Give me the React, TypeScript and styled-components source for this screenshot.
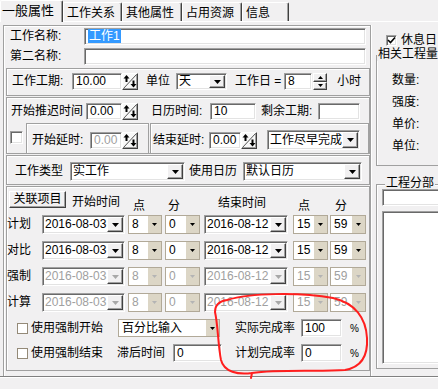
import styled, { createGlobalStyle, css } from "styled-components";

const FACE = "#f1f0f1";

const GlobalStyle = createGlobalStyle`
  html, body { margin: 0; padding: 0; background: ${FACE}; }
  body {
    font-family: "Liberation Sans", "Noto Sans CJK SC", sans-serif;
    font-size: 12px;
    color: #000;
  }
  * { box-sizing: border-box; }
`;

const sunken = css`
  background: #fff;
  border: 1px solid;
  border-color: #a0a0a0 #fff #fff #a0a0a0;
  box-shadow: inset 1px 1px 0 #696969, inset -1px -1px 0 #e3e3e3;
`;

const raised = css`
  background: ${FACE};
  border: 1px solid;
  border-color: #fff #404040 #404040 #fff;
  box-shadow: inset -1px -1px 0 #a0a0a0;
`;

const Window = styled.div`
  position: relative;
  width: 438px;
  height: 389px;
  overflow: hidden;
  background: ${FACE};
`;

const TabStrip = styled.div`
  position: relative;
  z-index: 1;
  display: flex;
  align-items: flex-end;
  height: 21px;
`;

const Tab = styled.div<{ $active?: boolean; $w: number }>`
  flex-shrink: 0;
  width: ${p => p.$w}px;
  height: ${p => (p.$active ? 22 : 19)}px;
  margin-bottom: ${p => (p.$active ? -1 : 0)}px;
  padding: ${p => (p.$active ? "2px 0 0 1px" : "3px 0 0 3px")};
  background: ${FACE};
  border-top: 1px solid #fff;
  border-left: 1px solid #fff;
  border-right: 1px solid #404040;
  border-radius: 2px 2px 0 0;
  box-shadow: inset -1px 0 0 #a0a0a0;
  font-size: ${p => (p.$active ? 13 : 12)}px;
  line-height: 15px;
  white-space: nowrap;
`;

const Page = styled.div`
  display: flex;
  height: 356px;
  border-top: 1px solid #fff;
  border-bottom: 1px solid #808080;
  box-shadow: 0 1px 0 #fff;
`;

const LeftPanel = styled.div`
  display: flex;
  flex-direction: column;
  flex-shrink: 0;
  width: 368px;
  height: 351px;
  margin: 3px 0 0 3px;
  border: 1px solid #a0a0a0;
  border-bottom: none;
  box-shadow: inset 1px 1px 0 #fff, 1px 0 0 #fff;
`;

const Row = styled.div<{ $h?: number; $mt?: number; $pl?: number }>`
  display: flex;
  align-items: center;
  flex-shrink: 0;
  height: ${p => p.$h ?? 17}px;
  margin-top: ${p => p.$mt ?? 0}px;
  padding-left: ${p => p.$pl ?? 0}px;
`;

const HeadRow = styled.div`
  display: flex;
  align-items: flex-start;
  flex-shrink: 0;
  height: 24px;
  margin-top: 4px;
`;

const SplitRow = styled.div`
  display: flex;
  align-items: stretch;
  flex-shrink: 0;
  height: 30px;
  margin-top: 3px;
`;

const Label = styled.span<{ $w?: number; $ml?: number; $mt?: number; $small?: boolean }>`
  display: block;
  flex-shrink: 0;
  width: ${p => (p.$w ? `${p.$w}px` : "auto")};
  margin-left: ${p => p.$ml ?? 0}px;
  margin-top: ${p => p.$mt ?? 0}px;
  font-size: ${p => (p.$small ? 10 : 12)}px;
  line-height: 15px;
  white-space: nowrap;
`;

const Group = styled.div<{ $h: number; $mt?: number }>`
  display: flex;
  flex-direction: column;
  flex-shrink: 0;
  height: ${p => p.$h}px;
  margin: ${p => p.$mt ?? 1}px 0 0 2px;
  border: 1px solid #a0a0a0;
  box-shadow: inset 1px 1px 0 #fff;
`;

const SubFrame = styled.div<{ $w?: number; $ml?: number }>`
  display: flex;
  align-items: center;
  ${p => (p.$w ? `width: ${p.$w}px; flex-shrink: 0;` : "flex: 1;")}
  margin-left: ${p => p.$ml ?? 0}px;
  padding-top: 3px;
  border: 1px solid #a0a0a0;
  border-bottom: none;
  box-shadow: inset 1px 1px 0 #fff;
`;

const Field = styled.div<{ $w: number; $h?: number; $dis?: boolean }>`
  ${sunken};
  flex-shrink: 0;
  width: ${p => p.$w}px;
  height: ${p => p.$h ?? 17}px;
  padding-left: 3px;
  line-height: ${p => (p.$h ?? 17) - 2}px;
  color: ${p => (p.$dis ? "#a0a0a0" : "#000")};
  white-space: nowrap;
  overflow: hidden;
`;

const Selected = styled.span`
  background: #3399ff;
  color: #fff;
  padding: 0 1px;
`;

const Combo = styled.div<{ $w: number; $h?: number; $ml?: number }>`
  ${sunken};
  display: flex;
  flex-shrink: 0;
  width: ${p => p.$w}px;
  height: ${p => p.$h ?? 19}px;
  margin-left: ${p => p.$ml ?? 0}px;
  padding: 1px;
`;

const ComboText = styled.span<{ $dis?: boolean; $lh?: number }>`
  flex: 1;
  padding-left: 1px;
  line-height: ${p => p.$lh ?? 15}px;
  color: ${p => (p.$dis ? "#a0a0a0" : "#000")};
  white-space: nowrap;
  overflow: hidden;
`;

const ComboBtn = styled.span`
  ${raised};
  display: flex;
  align-items: center;
  justify-content: center;
  flex-shrink: 0;
  width: 16px;
`;

const TanCombo = styled.div<{ $w: number; $h?: number; $ml?: number }>`
  display: flex;
  flex-shrink: 0;
  width: ${p => p.$w}px;
  height: ${p => p.$h ?? 19}px;
  margin-left: ${p => p.$ml ?? 0}px;
  background: #fff;
  border: 1px solid #b1a998;
`;

const TanText = styled.span<{ $dis?: boolean }>`
  flex: 1;
  padding-left: 3px;
  line-height: 17px;
  color: ${p => (p.$dis ? "#a0a0a0" : "#000")};
  white-space: nowrap;
  overflow: hidden;
`;

const TanBtn = styled.span`
  display: flex;
  align-items: center;
  justify-content: center;
  flex-shrink: 0;
  width: 13px;
  background: #dcd6c6;
`;

const SpinBox = styled.span`
  ${raised};
  display: flex;
  align-items: center;
  justify-content: center;
  flex-shrink: 0;
  width: 16px;
  height: 17px;
  background: #f8f8f8;
`;

const UpDown = styled.div`
  display: flex;
  flex-direction: column;
  flex-shrink: 0;
  width: 14px;
  height: 17px;
  margin-left: 1px;
`;

const UpDownBtn = styled.span`
  ${raised};
  flex: 1;
  display: flex;
  align-items: center;
  justify-content: center;
`;

const PushButton = styled.div`
  ${raised};
  flex-shrink: 0;
  width: 57px;
  height: 17px;
  margin-left: 2px;
  line-height: 15px;
  text-align: center;
`;

const Check = styled.span<{ $flat?: boolean; $size?: number; $ml?: number; $mt?: number }>`
  display: flex;
  align-items: center;
  justify-content: center;
  flex-shrink: 0;
  width: ${p => p.$size ?? 13}px;
  height: ${p => p.$size ?? 13}px;
  margin-left: ${p => p.$ml ?? 0}px;
  margin-top: ${p => p.$mt ?? 0}px;
  align-self: ${p => (p.$mt ? "flex-start" : "center")};
  ${p => (p.$flat ? css`background: #fff; border: 1px solid #948a78;` : sunken)}
`;

const RightCol = styled.div`
  display: flex;
  flex-direction: column;
  flex-shrink: 0;
  width: 110px;
  padding-left: 5px;
`;

const RestDay = styled.div`
  display: flex;
  align-items: center;
  gap: 4px;
  height: 13px;
  margin-top: 12px;
  padding-left: 10px;
`;

const Frame = styled.div<{ $h: number; $mt: number }>`
  display: flex;
  flex-direction: column;
  flex-shrink: 0;
  width: 100px;
  height: ${p => p.$h}px;
  margin-top: ${p => p.$mt}px;
  border: 1px solid #a0a0a0;
  box-shadow: inset 1px 1px 0 #fff;
`;

const Caption = styled.span<{ $ml: number }>`
  align-self: flex-start;
  margin: -8px 0 0 ${p => p.$ml}px;
  padding: 0 1px;
  background: ${FACE};
  line-height: 13px;
  white-space: nowrap;
`;

const QtyList = styled.div`
  display: flex;
  flex-direction: column;
  margin-top: 8px;
  padding-left: 15px;
  line-height: 22px;
`;

const PartInput = styled.div`
  ${sunken};
  width: 90px;
  height: 17px;
  margin: -1px 0 0 5px;
`;

const ListBox = styled.div`
  ${sunken};
  width: 90px;
  height: 153px;
  margin: 5px 0 0 5px;
`;

const Annotation = styled.svg`
  position: absolute;
  left: 0;
  top: 0;
  pointer-events: none;
`;

const Tri = ({ up, c = "#000", w = 7, h = 4 }: { up?: boolean; c?: string; w?: number; h?: number }) => (
  <svg width={w} height={h} viewBox={`0 0 ${w} ${h}`}>
    <polygon points={up ? `0,${h} ${w},${h} ${w / 2},0` : `0,0 ${w},0 ${w / 2},${h}`} fill={c} />
  </svg>
);

const SpinButton = () => (
  <SpinBox>
    <svg width="14" height="15" viewBox="0 0 14 15">
      <line x1="0.5" y1="14.5" x2="13.5" y2="0.5" stroke="#555" strokeWidth="1" />
      <polygon points="0.5,4.5 6.5,4.5 3.5,1" fill="#000" />
      <rect x="2.5" y="4" width="2" height="4" fill="#000" />
      <polygon points="7.5,10 13.5,10 10.5,13.5" fill="#000" />
      <rect x="9.5" y="6.5" width="2" height="4" fill="#000" />
    </svg>
  </SpinBox>
);

const DateBox = ({ value, dis, w, ml }: { value: string; dis?: boolean; w: number; ml?: number }) => (
  <Combo $w={w} $ml={ml}>
    <ComboText $dis={dis}>{value}</ComboText>
    <ComboBtn><Tri c={dis ? "#a8a8a8" : "#000"} /></ComboBtn>
  </Combo>
);

const NumBox = ({ value, dis, w, ml }: { value: string; dis?: boolean; w: number; ml?: number }) => (
  <TanCombo $w={w} $ml={ml}>
    <TanText $dis={dis}>{value}</TanText>
    <TanBtn><Tri w={5} h={3} c={dis ? "#b4b4b4" : "#000"} /></TanBtn>
  </TanCombo>
);

const timeRows = [
  { name: "计划", dis: false },
  { name: "对比", dis: false },
  { name: "强制", dis: true },
  { name: "计算", dis: true },
];

export default function App() {
  return (
    <>
      <GlobalStyle />
      <Window>
        <TabStrip>
          <Tab $w={63} $active>一般属性</Tab>
          <Tab $w={59}>工作关系</Tab>
          <Tab $w={60}>其他属性</Tab>
          <Tab $w={60}>占用资源</Tab>
          <Tab $w={47}>信息</Tab>
        </TabStrip>
        <Page>
          <LeftPanel>
            <Row $mt={2} $pl={6}>
              <Label $w={74}>工作名称:</Label>
              <Field $w={282}><Selected>工作1</Selected></Field>
            </Row>
            <Row $mt={3} $pl={6}>
              <Label $w={74}>第二名称:</Label>
              <Field $w={282} />
            </Row>

            <Group $h={28} $mt={3}>
              <Row $mt={4}>
                <Label $ml={5} $w={60}>工作工期:</Label>
                <Field $w={50}>10.00</Field>
                <SpinButton />
                <Label $ml={8} $w={30}>单位</Label>
                <Combo $w={51} $h={17}>
                  <ComboText $lh={13}>天</ComboText>
                  <ComboBtn><Tri /></ComboBtn>
                </Combo>
                <Label $ml={8} $w={49}>工作日 =</Label>
                <Field $w={28}>8</Field>
                <UpDown>
                  <UpDownBtn><Tri up w={5} h={3} /></UpDownBtn>
                  <UpDownBtn><Tri w={5} h={3} /></UpDownBtn>
                </UpDown>
                <Label $ml={10}>小时</Label>
              </Row>
            </Group>

            <Group $h={57}>
              <Row $mt={5}>
                <Label $ml={4} $w={75}>开始推迟时间</Label>
                <Field $w={36}>0.00</Field>
                <SpinButton />
                <Label $ml={13} $w={59}>日历时间:</Label>
                <Field $w={46}>10</Field>
                <Label $ml={5} $w={57}>剩余工期:</Label>
                <Field $w={42} />
              </Row>
              <SplitRow>
                <Check $ml={3} $mt={8} />
                <SubFrame $w={123} $ml={3}>
                  <Label $ml={5} $w={58}>开始延时:</Label>
                  <Field $w={32} $dis>0.00</Field>
                  <SpinButton />
                </SubFrame>
                <SubFrame $ml={1}>
                  <Label $ml={2} $w={56}>结束延时:</Label>
                  <Field $w={32}>0.00</Field>
                  <SpinButton />
                  <Combo $w={93} $h={20} $ml={10}>
                    <ComboText $lh={16}>工作尽早完成</ComboText>
                    <ComboBtn><Tri /></ComboBtn>
                  </Combo>
                </SubFrame>
              </SplitRow>
            </Group>

            <Group $h={30}>
              <Row $mt={6} $h={19}>
                <Label $ml={8} $w={55}>工作类型</Label>
                <Combo $w={115}>
                  <ComboText>实工作</ComboText>
                  <ComboBtn><Tri /></ComboBtn>
                </Combo>
                <Label $ml={4} $w={54}>使用日历</Label>
                <Combo $w={119}>
                  <ComboText>默认日历</ComboText>
                  <ComboBtn><Tri /></ComboBtn>
                </Combo>
              </Row>
            </Group>

            <Group $h={185}>
              <HeadRow>
                <PushButton>关联项目</PushButton>
                <Label $ml={6} $mt={4} $w={61}>开始时间</Label>
                <Label $mt={8} $w={35}>点</Label>
                <Label $mt={8} $w={50}>分</Label>
                <Label $mt={5} $w={80}>结束时间</Label>
                <Label $mt={8} $w={37}>点</Label>
                <Label $mt={8}>分</Label>
              </HeadRow>
              {timeRows.map((r, i) => (
                <Row key={r.name} $h={19} $mt={i === 0 ? 0 : 7}>
                  <Label $w={35}>{r.name}</Label>
                  <DateBox w={83} value="2016-08-03" dis={r.dis} />
                  <NumBox w={34} ml={3} value="8" dis={r.dis} />
                  <NumBox w={35} ml={3} value="0" dis={r.dis} />
                  <DateBox w={84} ml={4} value="2016-08-12" dis={r.dis} />
                  <NumBox w={35} ml={5} value="15" dis={r.dis} />
                  <NumBox w={36} ml={2} value="59" dis={r.dis} />
                </Row>
              ))}
              <Row $h={18} $mt={7}>
                <Check $flat $size={11} $ml={10} />
                <Label $ml={3} $w={87}>使用强制开始</Label>
                <TanCombo $w={102} $h={18}>
                  <TanText>百分比输入</TanText>
                  <TanBtn><Tri w={5} h={3} /></TanBtn>
                </TanCombo>
                <Label $ml={15} $w={66}>实际完成率</Label>
                <Field $w={41} $h={18}>100</Field>
                <Label $ml={8} $small>%</Label>
              </Row>
              <Row $h={18} $mt={7}>
                <Check $flat $size={11} $ml={10} />
                <Label $ml={3} $w={86}>使用强制结束</Label>
                <Label $w={56}>滞后时间</Label>
                <Field $w={49} $h={18}>0</Field>
                <Label $ml={13} $w={66}>计划完成率</Label>
                <Field $w={41} $h={18}>0</Field>
                <Label $ml={8} $small>%</Label>
              </Row>
            </Group>
          </LeftPanel>

          <RightCol>
            <RestDay>
              <Check $size={11}>
                <svg width="9" height="9" viewBox="0 0 9 9">
                  <polyline points="1,4 3.5,6.5 8,1.5" fill="none" stroke="#000" strokeWidth="1.6" />
                </svg>
              </Check>
              <Label>休息日</Label>
            </RestDay>
            <Frame $h={111} $mt={8}>
              <Caption $ml={0}>相关工程量</Caption>
              <QtyList>
                <span>数量:</span>
                <span>强度:</span>
                <span>单价:</span>
                <span>单位:</span>
              </QtyList>
            </Frame>
            <Frame $h={185} $mt={18}>
              <Caption $ml={8}>工程分部</Caption>
              <PartInput />
              <ListBox />
            </Frame>
          </RightCol>
        </Page>

        <Annotation width="438" height="389" viewBox="0 0 438 389">
          <path
            d="M227,300 C250,293 300,292 333,298 C355,303 366,318 367,338 C368,355 362,367 345,370 C320,372 280,369 252,373 L251,378 M252,373 C238,375 224,372 221,360 C218,345 218,325 215,312 C215,305 220,301 227,300"
            fill="none"
            stroke="#ff1e1e"
            strokeWidth="2"
            strokeLinecap="round"
          />
        </Annotation>
      </Window>
    </>
  );
}
